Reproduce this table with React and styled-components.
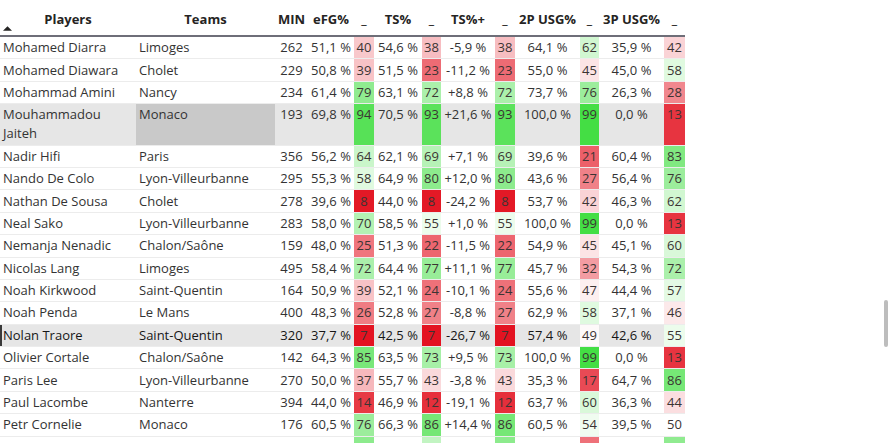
import styled, { createGlobalStyle } from 'styled-components';

const GlobalStyle = createGlobalStyle`
    html, body {
        margin: 0;
        padding: 0;
        background: #ffffff;
    }
    body {
        font-family: 'Open Sans', 'Noto Sans', sans-serif;
        font-size: 13px;
        color: #333333;
    }
`;

const COLS = '136px 139px 33px 46px 20px 48px 19px 54px 20px 65px 19px 65px 21px';

const HEADERS = ['Players', 'Teams', 'MIN', 'eFG%', '_', 'TS%', '_', 'TS%+', '_', '2P USG%', '_', '3P USG%', '_'];

// name, team, min, efg, efgScore, ts, tsScore, tsPlus, tsPlusScore, p2, p2Score, p3, p3Score
const ROWS = [
    ['Mohamed Diarra', 'Limoges', 262, '51,1 %', 40, '54,6 %', 38, '-5,9 %', 38, '64,1 %', 62, '35,9 %', 42],
    ['Mohamed Diawara', 'Cholet', 229, '50,8 %', 39, '51,5 %', 23, '-11,2 %', 23, '55,0 %', 45, '45,0 %', 58],
    ['Mohammad Amini', 'Nancy', 234, '61,4 %', 79, '63,1 %', 72, '+8,8 %', 72, '73,7 %', 76, '26,3 %', 28],
    ['Mouhammadou Jaiteh', 'Monaco', 193, '69,8 %', 94, '70,5 %', 93, '+21,6 %', 93, '100,0 %', 99, '0,0 %', 13, 'selected'],
    ['Nadir Hifi', 'Paris', 356, '56,2 %', 64, '62,1 %', 69, '+7,1 %', 69, '39,6 %', 21, '60,4 %', 83],
    ['Nando De Colo', 'Lyon-Villeurbanne', 295, '55,3 %', 58, '64,9 %', 80, '+12,0 %', 80, '43,6 %', 27, '56,4 %', 76],
    ['Nathan De Sousa', 'Cholet', 278, '39,6 %', 8, '44,0 %', 8, '-24,2 %', 8, '53,7 %', 42, '46,3 %', 62],
    ['Neal Sako', 'Lyon-Villeurbanne', 283, '58,0 %', 70, '58,5 %', 55, '+1,0 %', 55, '100,0 %', 99, '0,0 %', 13],
    ['Nemanja Nenadic', 'Chalon/Saône', 159, '48,0 %', 25, '51,3 %', 22, '-11,5 %', 22, '54,9 %', 45, '45,1 %', 60],
    ['Nicolas Lang', 'Limoges', 495, '58,4 %', 72, '64,4 %', 77, '+11,1 %', 77, '45,7 %', 32, '54,3 %', 72],
    ['Noah Kirkwood', 'Saint-Quentin', 164, '50,9 %', 39, '52,1 %', 24, '-10,1 %', 24, '55,6 %', 47, '44,4 %', 57],
    ['Noah Penda', 'Le Mans', 400, '48,3 %', 26, '52,8 %', 27, '-8,8 %', 27, '62,9 %', 58, '37,1 %', 46],
    ['Nolan Traore', 'Saint-Quentin', 320, '37,7 %', 7, '42,5 %', 7, '-26,7 %', 7, '57,4 %', 49, '42,6 %', 55, 'focused'],
    ['Olivier Cortale', 'Chalon/Saône', 142, '64,3 %', 85, '63,5 %', 73, '+9,5 %', 73, '100,0 %', 99, '0,0 %', 13],
    ['Paris Lee', 'Lyon-Villeurbanne', 270, '50,0 %', 37, '55,7 %', 43, '-3,8 %', 43, '35,3 %', 17, '64,7 %', 86],
    ['Paul Lacombe', 'Nanterre', 394, '44,0 %', 14, '46,9 %', 12, '-19,1 %', 12, '63,7 %', 60, '36,3 %', 44],
    ['Petr Cornelie', 'Monaco', 176, '60,5 %', 76, '66,3 %', 86, '+14,4 %', 86, '60,5 %', 54, '39,5 %', 50],
];

// the next row only peeks in under the bottom edge: just its colour cells show
const PEEK_SCORES = [80, 66, 80, 24, 79];

const mix = (a, b, t) => a.map((v, i) => Math.round(v + (b[i] - v) * t));

function scoreBg(v) {
    if (v < 50) {
        const t = Math.min(1, (50 - v) / 44);
        const [r, g, b] = mix([255, 255, 255], [226, 14, 28], t);
        return `rgb(${r}, ${g}, ${b})`;
    }
    const t = Math.min(1, (v - 50) / 49);
    const [r, g, b] = mix([255, 255, 255], [68, 222, 68], t);
    return `rgb(${r}, ${g}, ${b})`;
}

function App() {
    return (
        <>
            <GlobalStyle />
            <Page>
                <Table>
                    <HeaderRow>
                        {HEADERS.map((h, i) => (
                            <HeadCell key={i}>
                                {h}
                                {i === 0 && (
                                    <SortArrow viewBox="0 0 10 5">
                                        <polygon points="0,5 5,0 10,5" fill="#252423" />
                                    </SortArrow>
                                )}
                            </HeadCell>
                        ))}
                    </HeaderRow>

                    {ROWS.map((r) => {
                        const state = r[13];
                        return (
                            <Row key={r[0]} $state={state}>
                                <Cell $text>{r[0]}</Cell>
                                <Cell $text $picked={state === 'selected'}>
                                    {r[1]}
                                </Cell>
                                <Cell>{r[2]}</Cell>
                                <Cell>{r[3]}</Cell>
                                <ScoreCell style={{ background: scoreBg(r[4]) }}>{r[4]}</ScoreCell>
                                <Cell>{r[5]}</Cell>
                                <ScoreCell style={{ background: scoreBg(r[6]) }}>{r[6]}</ScoreCell>
                                <Cell>{r[7]}</Cell>
                                <ScoreCell style={{ background: scoreBg(r[8]) }}>{r[8]}</ScoreCell>
                                <Cell>{r[9]}</Cell>
                                <ScoreCell style={{ background: scoreBg(r[10]) }}>{r[10]}</ScoreCell>
                                <Cell>{r[11]}</Cell>
                                <ScoreCell style={{ background: scoreBg(r[12]) }}>{r[12]}</ScoreCell>
                            </Row>
                        );
                    })}

                    <Row>
                        <Cell />
                        <Cell />
                        <Cell />
                        <Cell />
                        <ScoreCell style={{ background: scoreBg(PEEK_SCORES[0]) }} />
                        <Cell />
                        <ScoreCell style={{ background: scoreBg(PEEK_SCORES[1]) }} />
                        <Cell />
                        <ScoreCell style={{ background: scoreBg(PEEK_SCORES[2]) }} />
                        <Cell />
                        <ScoreCell style={{ background: scoreBg(PEEK_SCORES[3]) }} />
                        <Cell />
                        <ScoreCell style={{ background: scoreBg(PEEK_SCORES[4]) }} />
                    </Row>
                </Table>
                <ScrollThumb />
            </Page>
        </>
    );
}

export default App;

const Page = styled.div`
    position: relative;
    width: 888px;
    height: 443px;
    overflow: hidden;
    background: #ffffff;
`;

const Table = styled.div`
    width: 685px;
    display: flex;
    flex-direction: column;
`;

const HeaderRow = styled.div`
    display: grid;
    grid-template-columns: ${COLS};
    height: 35px;
    border-bottom: 2px solid #6e6e78;
`;

const HeadCell = styled.div`
    position: relative;
    display: flex;
    align-items: center;
    justify-content: center;
    padding-top: 2px;
    font-weight: 700;
    font-size: 13px;
    color: #252423;
    white-space: nowrap;
`;

const SortArrow = styled.svg`
    position: absolute;
    left: 3px;
    bottom: 4px;
    width: 9px;
    height: 5px;
`;

const Row = styled.div`
    display: grid;
    grid-template-columns: ${COLS};
    min-height: 22.4px;
    box-sizing: border-box;
    border-bottom: 1px solid #ececec;
    background: ${(p) => (p.$state ? '#e6e6e6' : '#ffffff')};
    color: ${(p) => (p.$state === 'focused' ? '#161616' : '#333333')};
    box-shadow: ${(p) => (p.$state === 'focused' ? 'inset 2px 0 0 #3a3a3a' : 'none')};
`;

const Cell = styled.div`
    padding: 1.2px 3px;
    line-height: 19px;
    text-align: ${(p) => (p.$text ? 'left' : 'center')};
    background: ${(p) => (p.$picked ? '#c9c9c9' : 'transparent')};
    white-space: ${(p) => (p.$text ? 'normal' : 'nowrap')};
`;

const ScoreCell = styled(Cell)`
    padding: 1.2px 0;
    color: #3b3433;
`;

const ScrollThumb = styled.div`
    position: absolute;
    right: 0;
    top: 300px;
    width: 4px;
    height: 47px;
    border-radius: 2px;
    background: #bdbdbd;
`;
